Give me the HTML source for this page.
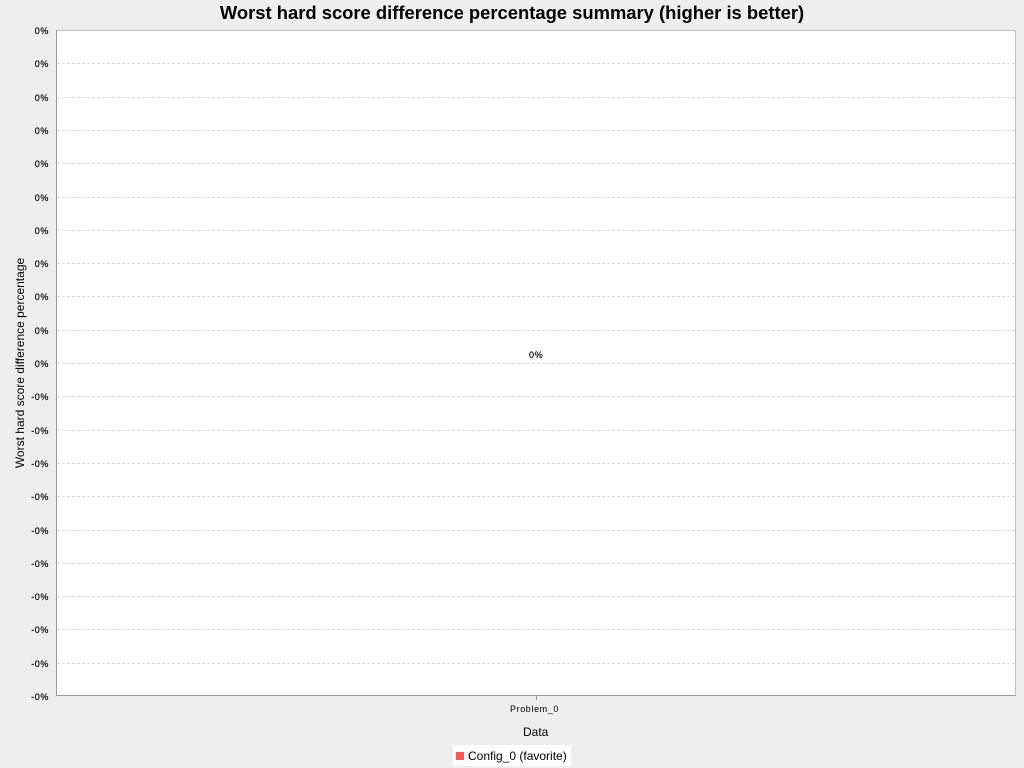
<!DOCTYPE html>
<html><head><style>
body{margin:0;width:1024px;height:768px;background:#eeeeee;position:relative;overflow:hidden;font-family:"Liberation Sans",sans-serif;}
.t{position:absolute;left:0;width:1024px;top:2px;text-align:center;font-weight:bold;font-size:18.4px;color:#000;}
.plot{position:absolute;left:56px;top:30px;width:960px;height:666px;background:#fff;border-left:1px solid #999;border-bottom:1px solid #999;box-sizing:border-box;border-top:1px solid #c0c0c0;border-right:1px solid #c0c0c0}
.g{position:absolute;left:57px;width:958px;border-top:1px dashed #dcdcdc;height:0}
.l{position:absolute;right:975px;font-size:9px;color:#000;letter-spacing:0.6px;line-height:10px;-webkit-text-stroke:0.2px #000}
</style></head><body>
<div class="t">Worst hard score difference percentage summary (higher is better)</div>
<div class="plot"></div>
<div id="grid"></div>
<div style="position:absolute;left:529px;top:350px;font-size:9px;letter-spacing:0.6px;-webkit-text-stroke:0.2px #000">0%</div>
<div style="position:absolute;left:536px;top:696px;width:1px;height:4px;background:#999"></div>
<div style="position:absolute;left:510px;top:704px;font-size:9px;letter-spacing:0.6px">Problem_0</div>
<div style="position:absolute;left:523px;top:725px;font-size:12px">Data</div>
<div style="position:absolute;left:14px;top:363px;font-size:12px;transform:translate(-50%,-50%) rotate(-90deg);transform-origin:center;white-space:nowrap;margin-left:6px">Worst hard score difference percentage</div>
<div style="position:absolute;left:453px;top:745px;width:118px;height:21px;background:#fff"></div>
<div style="position:absolute;left:456px;top:752px;width:8px;height:8px;background:#ff5555"></div>
<div style="position:absolute;left:468px;top:749px;font-size:12px">Config_0 (favorite)</div>
<script>
var h='';
for(var i=0;i<=20;i++){var y=30+i*666/20;y=Math.round(y);
if(i>0&&i<20)h+='<div class="g" style="top:'+y+'px"></div>';
h+='<div class="l" style="top:'+(y-4)+'px">'+(i<=10?'0%':'-0%')+'</div>';}
document.getElementById('grid').innerHTML=h;
</script>
</body></html>
